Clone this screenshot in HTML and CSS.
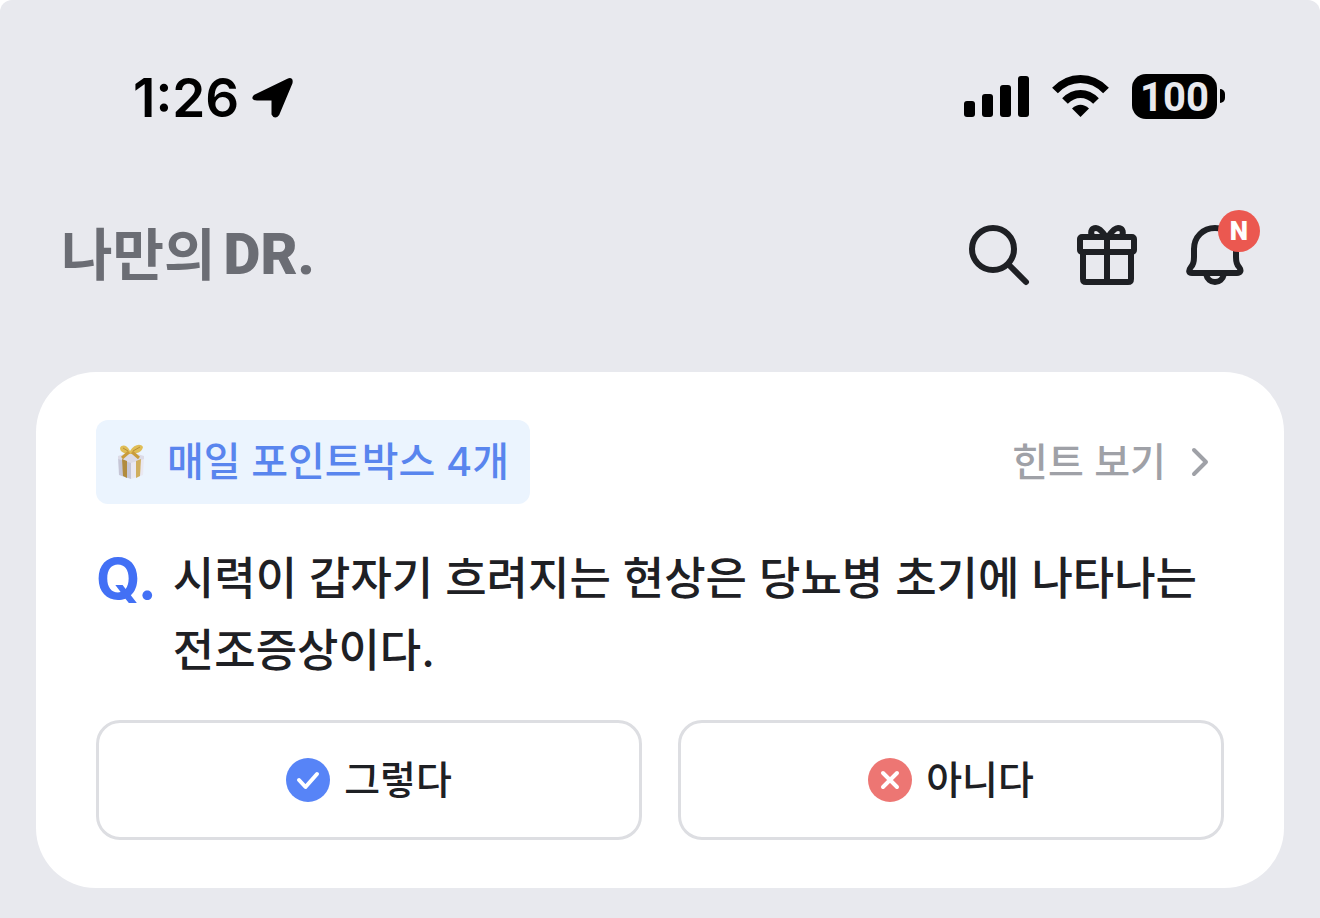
FILE: index.html
```html
<!DOCTYPE html>
<html lang="ko">
<head>
    <meta charset="utf-8" />
    <meta name="viewport" content="width=device-width, initial-scale=1" />
    <title>나만의DR.</title>
    <link rel="stylesheet" href="styles.css">
</head>
<body>
    <div class="screen">
        <div class="status_bar">
            <div class="status_left">
                <span class="time">1:26</span>
                <svg width="42" height="42" viewBox="0 0 42 42">
                    <path d="M3 19 L36 3 Q40 1 39 6 L26 37 Q23 41 21 37 V22 H5 Q0 22 3 19 Z" stroke="#000" stroke-width="3" stroke-linejoin="round"/>
                </svg>
            </div>
            <div class="status_right">
                <svg width="65" height="42" viewBox="0 0 65 42">
                    <rect x="0" y="26" width="11" height="16" rx="3"/>
                    <rect x="18" y="19" width="11" height="23" rx="3"/>
                    <rect x="36" y="10" width="11" height="32" rx="3"/>
                    <rect x="54" y="1" width="11" height="41" rx="3"/>
                </svg>
                <svg width="57" height="42" viewBox="0 0 57 42">
                    <g fill="none" stroke="#000" stroke-width="8">
                        <path d="M3 15.500 Q14 4 28.500 4 T54 15.500"/>
                        <path d="M13 26 Q20 19 28.500 19 T44 26"/>
                    </g>
                    <path d="M20 33.500 Q28.500 26 37 33.500 L28.500 42 Z"/>
                </svg>
                <div class="battery">
                    <div class="battery_body">100</div>
                    <div class="battery_tip"></div>
                </div>
            </div>
        </div>

        <header class="header">
            <a class="logo" href="#"><span>나만의</span><span class="logo_dr">DR.</span></a>
            <nav class="header_icons">
                <button class="icon_button" type="button" aria-label="검색">
                    <svg class="line_icon" viewBox="0 0 72 72">
                        <circle cx="30" cy="30" r="21"/>
                        <path d="M46 46 L63 63"/>
                    </svg>
                </button>
                <button class="icon_button" type="button" aria-label="선물">
                    <svg class="line_icon" viewBox="0 0 72 72">
                        <rect x="9" y="18" width="54" height="15" rx="2"/>
                        <path d="M12 34 V60 Q12 63 15 63 H57 Q60 63 60 60 V34 M36 18 V63"/>
                        <path d="M35 18 C31 12 28 9 25 9 C21 9 19 12 21 17 M37 18 C41 12 44 9 47 9 C51 9 53 12 51 17"/>
                    </svg>
                </button>
                <button class="icon_button" type="button" aria-label="알림">
                    <svg class="line_icon" viewBox="0 0 72 72">
                        <path d="M36 9 C24 9 15 18 15 30 V38 C15 44 14 46 12 48 C9 52 10 54 13 54 H58 C61 54 63 52 60 48 C58 46 57 44 57 38 V30 C57 18 48 9 36 9 Z"/>
                        <path d="M27 55 C28 60 32 63 36 63 S44 60 45 55"/>
                    </svg>
                    <span class="new_badge">N</span>
                </button>
            </nav>
        </header>

        <main class="card">
            <div class="card_top">
                <div class="point_box">
                    <svg width="28" height="36" viewBox="0 0 28 36">
                        <path d="M1 13 L14 16 V35 L2 31 Z" fill="#c6c6d6"/>
                        <path d="M14 16 L27 13 L26 31 L14 35 Z" fill="#e9e8f2"/>
                        <path d="M1 12 L14 8 L27 12 L27 15 L14 19 L1 15 Z" fill="#dcdbe7"/>
                        <path d="M5 15 L10 17 V34 L6 32 Z" fill="#b18b3d"/>
                        <path d="M19 17 L24 15 L23 32 L19 34 Z" fill="#d0ae5e"/>
                        <path d="M13 10 C8 10 3 8 3 4 C5 0 10 1 13 7 C17 0 24 -1 26 3 C25 8 20 10 13 10 Z" fill="#dfbd57"/>
                        <path d="M6 4 L11 7 M23 3 L16 7" stroke="#b98d38" stroke-width="1"/>
                        <path d="M12 8 L5 14 M15 8 L22 14" stroke="#c99c3c" stroke-width="3"/>
                    </svg>
                    <span>매일 포인트박스 4개</span>
                </div>
                <a class="hint" href="#">
                    <span>힌트 보기</span>
                    <svg width="18" height="30" viewBox="0 0 18 30">
                        <path d="M3 3 L15 15 L3 27" fill="none" stroke="#9fa1a7" stroke-width="4" stroke-linecap="round" stroke-linejoin="round"/>
                    </svg>
                </a>
            </div>

            <div class="question">
                <span class="question_mark">Q.</span>
                <p class="question_text">시력이 갑자기 흐려지는 현상은 당뇨병 초기에 나타나는 전조증상이다.</p>
            </div>

            <div class="answers">
                <button class="answer" type="button">
                    <svg width="44" height="44" viewBox="0 0 44 44">
                        <circle cx="22" cy="22" r="22" fill="#5784f7"/>
                        <path d="M13 22 L19.500 29 L31 16" fill="none" stroke="#fff" stroke-width="4" stroke-linecap="round" stroke-linejoin="round"/>
                    </svg>
                    <span>그렇다</span>
                </button>
                <button class="answer" type="button">
                    <svg width="44" height="44" viewBox="0 0 44 44">
                        <circle cx="22" cy="22" r="22" fill="#ed7673"/>
                        <path d="M15 15 L29 29 M29 15 L15 29" fill="none" stroke="#fff" stroke-width="4" stroke-linecap="round"/>
                    </svg>
                    <span>아니다</span>
                </button>
            </div>
        </main>
    </div>
</body>
</html>
```

FILE: styles.css
```css
* {
    box-sizing: border-box;
}

body {
    margin: 0;
    background-color: white;
    color: #1e2024;
    font-family: Inter, "Noto Sans CJK KR", sans-serif;
    font-size: 39px;
    font-weight: 500;
    line-height: 48px;
}

a {
    color: inherit;
    text-decoration: none;
}

button {
    margin: 0;
    padding: 0;
    color: inherit;
    font: inherit;
    cursor: pointer;
}

svg {
    display: block;
    flex: none;
}

.screen {
    min-height: 100vh;
    padding: 66px 36px 30px;
    background-color: #e8e9ee;
    border-radius: 12px 12px 0 0;
}

/* status bar */
.status_bar {
    display: flex;
    align-items: center;
    justify-content: space-between;
    height: 60px;
    padding: 0 59px 0 97px;
    color: black;
}
.status_left {
    display: flex;
    align-items: center;
    gap: 13px;
    padding-top: 4px;
}
.time {
    font-size: 53px;
    font-weight: 600;
    line-height: 60px;
}
.status_right {
    display: flex;
    align-items: center;
    gap: 23px;
}
.battery {
    display: flex;
    align-items: center;
    gap: 3px;
}
.battery_body {
    width: 85px;
    height: 45px;
    border-radius: 14px;
    background-color: black;
    color: #e8e9ee;
    font-family: Roboto, sans-serif;
    font-size: 40px;
    font-weight: 700;
    line-height: 47px;
    text-align: center;
}
.battery_tip {
    width: 5px;
    height: 14px;
    border-radius: 0 5px 5px 0;
    background-color: black;
}

/* header */
.header {
    display: flex;
    align-items: center;
    justify-content: space-between;
    margin: 93px 0 81px;
    padding: 0 33px 0 25px;
}
.logo {
    display: flex;
    align-items: center;
    gap: 8px;
    color: #6b6d74;
    font-size: 56px;
    font-weight: 700;
    line-height: 72px;
}
.logo_dr {
    font-family: Roboto, sans-serif;
    font-size: 57px;
    font-weight: 900;
}
.header_icons {
    display: flex;
    gap: 36px;
}
.icon_button {
    position: relative;
    width: 72px;
    height: 72px;
    border: none;
    background: none;
}
.line_icon {
    width: 72px;
    height: 72px;
    fill: none;
    stroke: #1e2024;
    stroke-width: 6;
    stroke-linecap: round;
    stroke-linejoin: round;
}
.new_badge {
    position: absolute;
    top: -9px;
    right: -9px;
    width: 42px;
    height: 42px;
    border-radius: 50%;
    background-color: #eb5850;
    color: white;
    font-family: Roboto, sans-serif;
    font-size: 26px;
    font-weight: 900;
    line-height: 42px;
    text-align: center;
}

/* quiz card */
.card {
    padding: 48px 60px;
    border-radius: 60px;
    background-color: white;
}
.card_top {
    display: flex;
    align-items: center;
    justify-content: space-between;
}
.point_box {
    display: flex;
    align-items: center;
    gap: 22px;
    padding: 18px 21px;
    border-radius: 12px;
    background-color: #ebf4fe;
    color: #5985ee;
    font-size: 40px;
}
.hint {
    display: flex;
    align-items: center;
    gap: 25px;
    padding-right: 15px;
    color: #9fa1a7;
}
.question {
    display: flex;
    gap: 16px;
    margin: 39px 0 33px;
    line-height: 72px;
}
.question_mark {
    color: #4270f5;
    font-size: 57px;
    font-weight: 700;
}
.question_text {
    flex: 1;
    margin: 0;
    font-size: 45px;
    word-break: keep-all;
}
.answers {
    display: flex;
    gap: 36px;
}
.answer {
    display: flex;
    flex: 1;
    align-items: center;
    justify-content: center;
    gap: 14px;
    height: 120px;
    border: 3px solid #dddee2;
    border-radius: 24px;
    background-color: white;
}
```
